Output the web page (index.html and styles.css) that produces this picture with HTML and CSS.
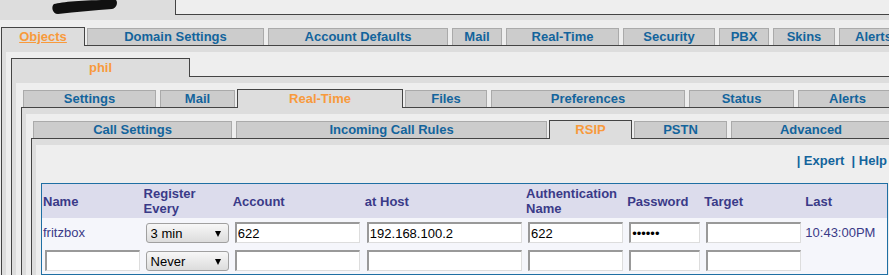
FILE: index.html
```html
<!DOCTYPE html>
<html lang="en">
<head>
    <meta charset="UTF-8">
    <title>RSIP</title>
    <link rel="stylesheet" href="styles.css">
</head>
<body>

    <div class="top">
        <svg class="scribble" width="70" height="16" viewBox="0 0 70 16">
            <path d="M4 4 C12 2 32 0 62 0 L66 0 C68 2 67 8 62 9 C45 10 26 12 8 14 C2 14 1 6 4 4 Z" fill="#111"/>
        </svg>
        <div class="topbox"></div>
    </div>

    <div class="page">
        <div class="tabs">
            <div class="tab on t-objects"><a href="#">Objects</a></div>
            <div class="tab t-domain">Domain Settings</div>
            <div class="tab t-account">Account Defaults</div>
            <div class="tab t-mail1">Mail</div>
            <div class="tab t-rt1">Real-Time</div>
            <div class="tab t-security">Security</div>
            <div class="tab t-pbx">PBX</div>
            <div class="tab t-skins">Skins</div>
            <div class="tab t-alerts1">Alerts</div>
        </div>
        <div class="panel">
            <div class="inner">

                <div class="tabs">
                    <div class="tab on t-phil">phil</div>
                </div>
                <div class="panel">
                    <div class="inner">

                        <div class="tabs">
                            <div class="tab t-settings">Settings</div>
                            <div class="tab t-mail3">Mail</div>
                            <div class="tab on t-rt3">Real-Time</div>
                            <div class="tab t-files">Files</div>
                            <div class="tab t-prefs">Preferences</div>
                            <div class="tab t-status">Status</div>
                            <div class="tab t-alerts3">Alerts</div>
                        </div>
                        <div class="panel">
                            <div class="inner">

                                <div class="tabs">
                                    <div class="tab t-call">Call Settings</div>
                                    <div class="tab t-rules">Incoming Call Rules</div>
                                    <div class="tab on t-rsip">RSIP</div>
                                    <div class="tab t-pstn">PSTN</div>
                                    <div class="tab t-advanced">Advanced</div>
                                </div>
                                <div class="panel">
                                    <div class="inner">

                                        <div class="links"><a href="#">| Expert</a>&nbsp; <a href="#">| Help</a></div>

                                        <table class="sip">
                                            <colgroup>
                                                <col class="c-name">
                                                <col class="c-every">
                                                <col class="c-account">
                                                <col class="c-host">
                                                <col class="c-auth">
                                                <col class="c-pass">
                                                <col class="c-target">
                                                <col class="c-last">
                                            </colgroup>
                                            <tr>
                                                <th>Name</th>
                                                <th>Register<br>Every</th>
                                                <th>Account</th>
                                                <th>at Host</th>
                                                <th>Authentication<br>Name</th>
                                                <th>Password</th>
                                                <th>Target</th>
                                                <th>Last</th>
                                            </tr>
                                            <tr>
                                                <td>fritzbox</td>
                                                <td><span class="sel"><select><option>3 min</option></select></span></td>
                                                <td><input class="i-account" type="text" value="622"></td>
                                                <td><input class="i-host" type="text" value="192.168.100.2"></td>
                                                <td><input class="i-auth" type="text" value="622"></td>
                                                <td><input class="i-pass" type="password" value="secret"></td>
                                                <td><input class="i-target" type="text" value=""></td>
                                                <td>10:43:00PM</td>
                                            </tr>
                                            <tr>
                                                <td><input class="i-name" type="text" value=""></td>
                                                <td><span class="sel"><select><option>Never</option></select></span></td>
                                                <td><input class="i-account" type="text" value=""></td>
                                                <td><input class="i-host" type="text" value=""></td>
                                                <td><input class="i-auth" type="text" value=""></td>
                                                <td><input class="i-pass" type="password" value=""></td>
                                                <td><input class="i-target" type="text" value=""></td>
                                                <td></td>
                                            </tr>
                                        </table>

                                    </div>
                                </div>

                            </div>
                        </div>

                    </div>
                </div>

            </div>
        </div>
    </div>

</body>
</html>
```

FILE: styles.css
```css
html {
    overflow: hidden;
}

body {
    margin: 0;
    width: 940px;
    background: #eee;
    font-family: "Liberation Sans", Arial, sans-serif;
    font-size: 13px;
}

a {
    text-decoration: none;
}

/* strip at the very top */
.top {
    display: flex;
    height: 20px;
    background: #ddd;
}

.scribble {
    flex-shrink: 0;
    display: block;
    margin-left: 50px;
    width: 70px;
    height: 16px;
}

.topbox {
    flex: 1;
    margin-left: 55px;
    height: 14px;
    background: #eee;
    border-left: 1px solid #444;
    border-bottom: 1px solid #444;
}

.page {
    padding: 7px 0 0 1px;
    background: #eee;
}

/* tab rows */
.tabs {
    display: flex;
    align-items: flex-end;
    border-bottom: 1px solid #444;
}

.tab {
    flex-shrink: 0;
    box-sizing: border-box;
    height: 17px;
    margin: 0 2px;
    border: 1px solid #aaa;
    border-bottom: 0;
    background: #ccc;
    color: #13649c;
    font-weight: bold;
    line-height: 16px;
    text-align: center;
    white-space: nowrap;
    overflow: hidden;
}

.tab.on {
    height: 19px;
    margin: 0 0 -1px;
    padding-top: 1px;
    border-color: #444;
    background: #ddd;
    color: #f89a3c;
}

.tab.on a {
    color: inherit;
    text-decoration: underline;
}

.t-objects { width: 84px; }
.t-domain { width: 177px; }
.t-account { width: 180px; }
.t-mail1 { width: 50px; }
.t-rt1 { width: 113px; }
.t-security { width: 92px; }
.t-pbx { width: 50px; }
.t-skins { width: 62px; }
.t-alerts1 { width: 69px; }

.t-phil { width: 179px; }

.t-settings { width: 133px; }
.t-mail3 { width: 75px; }
.t-rt3 { width: 166px; }
.t-files { width: 82px; }
.t-prefs { width: 194px; }
.t-status { width: 105px; }
.t-alerts3 { width: 99px; }

.t-call { width: 199px; }
.t-rules { width: 311px; }
.t-rsip { width: 83px; }
.t-pstn { width: 93px; }
.t-advanced { width: 160px; }

.panel {
    border-left: 1px solid #444;
    background: #ddd;
    padding: 6px 0 0 4px;
}

.inner {
    background: #eee;
    padding: 6px 0 0 5px;
}

/* RSIP page */
.links {
    margin-top: 2px;
    width: 846px;
    padding-right: 1px;
    line-height: 16px;
    text-align: right;
    font-weight: bold;
}

.links a {
    color: #13649c;
}

.sip {
    margin: 14px 0 20px;
    width: 847px;
    table-layout: fixed;
    border-collapse: collapse;
    border: 1px solid #1f6fa3;
    color: #3a3a88;
}

.c-name { width: 101px; }
.c-every { width: 89px; }
.c-account { width: 132px; }
.c-host { width: 161px; }
.c-auth { width: 101px; }
.c-pass { width: 77px; }
.c-target { width: 101px; }
.c-last { width: 83px; }

.sip th {
    padding: 2px 1px;
    background: #dcdcec;
    font-weight: bold;
    line-height: 15px;
    text-align: left;
    vertical-align: middle;
    white-space: nowrap;
    overflow: hidden;
}

.sip td {
    padding: 4px 0 3px 1px;
    background: #f5f6fb;
    vertical-align: middle;
    white-space: nowrap;
}

.sip input {
    display: block;
    box-sizing: border-box;
    height: 21px;
    margin: 0 0 0 2px;
    padding: 0 1px;
    border-style: solid;
    border-width: 2px 1px 1px 2px;
    border-color: #999 #ddd #ddd #999;
    background: #fff;
    color: #000;
    font-family: "Liberation Sans", Arial, sans-serif;
    font-size: 13px;
    outline: none;
}

.i-name { width: 95px; }
.i-account { width: 125px; }
.i-host { width: 155px; }
.i-auth { width: 95px; }
.i-pass { width: 71px; }
.i-target { width: 95px; }

.sel {
    position: relative;
    display: block;
    width: 85px;
}

.sel select {
    display: block;
    box-sizing: border-box;
    appearance: none;
    -webkit-appearance: none;
    width: 83px;
    height: 20px;
    margin: 1px 0 0 2px;
    padding: 0 0 0 4px;
    border: 1px solid #a0a0a0;
    border-radius: 3px;
    background: linear-gradient(#f7f7f7, #dcdcdc);
    color: #000;
    font-family: "Liberation Sans", Arial, sans-serif;
    font-size: 13px;
}

.sel::after {
    content: '';
    position: absolute;
    right: 8px;
    top: 8px;
    border-left: 3px solid transparent;
    border-right: 3px solid transparent;
    border-top: 6px solid #000;
}
```
